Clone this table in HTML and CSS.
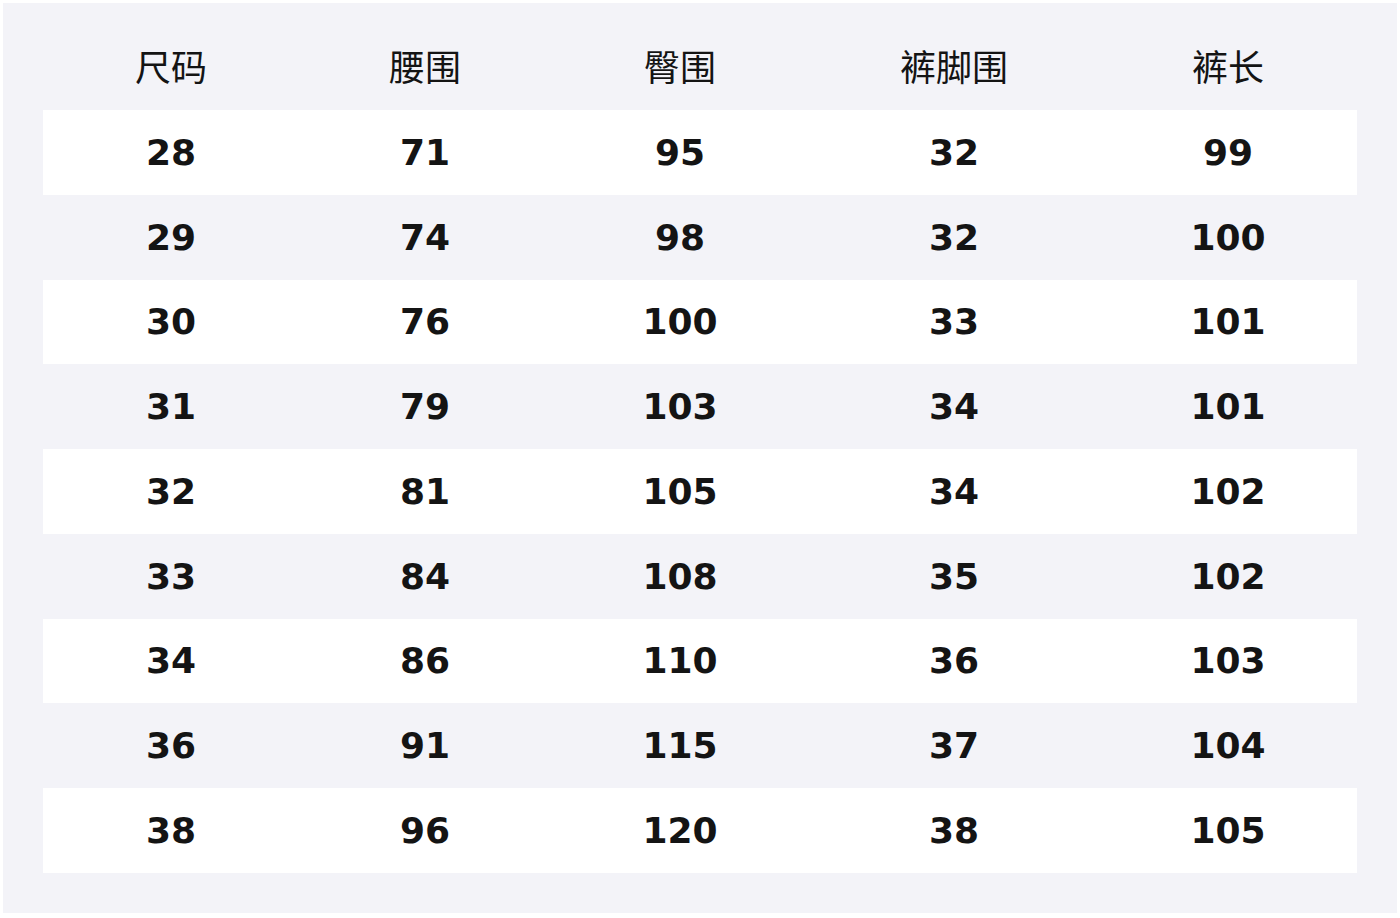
FILE: index.html
```html
<!DOCTYPE html>
<html lang="zh">
<head>
<meta charset="utf-8">
<link rel="stylesheet" href="styles.css">
</head>
<body>
<div class="panel">
<table class="size-table">
<colgroup>
<col class="c1"><col class="c2"><col class="c3"><col class="c4"><col class="c5">
</colgroup>
<thead>
<tr><th>尺码</th><th>腰围</th><th>臀围</th><th>裤脚围</th><th>裤长</th></tr>
</thead>
<tbody>
<tr><td>28</td><td>71</td><td>95</td><td>32</td><td>99</td></tr>
<tr><td>29</td><td>74</td><td>98</td><td>32</td><td>100</td></tr>
<tr><td>30</td><td>76</td><td>100</td><td>33</td><td>101</td></tr>
<tr><td>31</td><td>79</td><td>103</td><td>34</td><td>101</td></tr>
<tr><td>32</td><td>81</td><td>105</td><td>34</td><td>102</td></tr>
<tr><td>33</td><td>84</td><td>108</td><td>35</td><td>102</td></tr>
<tr><td>34</td><td>86</td><td>110</td><td>36</td><td>103</td></tr>
<tr><td>36</td><td>91</td><td>115</td><td>37</td><td>104</td></tr>
<tr><td>38</td><td>96</td><td>120</td><td>38</td><td>105</td></tr>
</tbody>
</table>
</div>
</body>
</html>
```
FILE: styles.css
```css
html, body {
  margin: 0;
  padding: 0;
  background: #ffffff;
}
.panel {
  margin: 3px;
  width: 1394px;
  height: 910px;
  box-sizing: border-box;
  background: #f3f3f8;
  padding: 22px 40px 0 40px;
}
.size-table {
  border-collapse: collapse;
  table-layout: fixed;
  width: 1314px;
  color: #141414;
}
.c1 { width: 256px; }
.c2 { width: 252px; }
.c3 { width: 258px; }
.c4 { width: 290px; }
.c5 { width: 258px; }
.size-table th {
  height: 85px;
  box-sizing: border-box;
  padding: 0 0 6px 0;
  text-align: center;
  vertical-align: middle;
  font-family: "Noto Sans CJK SC", "DejaVu Sans", sans-serif;
  font-weight: 400;
  font-size: 36px;
}
.size-table td {
  height: 84.75px;
  padding: 0;
  text-align: center;
  vertical-align: middle;
  font-family: "DejaVu Sans", sans-serif;
  font-weight: 700;
  font-size: 36px;
}
.size-table tbody tr:nth-child(odd) td {
  background: #ffffff;
}
```
